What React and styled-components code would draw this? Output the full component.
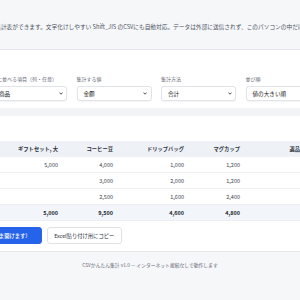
import React from "react";
import styled, { createGlobalStyle } from "styled-components";

const GlobalStyle = createGlobalStyle`
	html, body {
		margin: 0;
		padding: 0;
		background: #f6f7f9;
		font-family: "Noto Sans CJK JP", "Noto Sans", sans-serif;
	}
	body {
		width: 300px;
		height: 300px;
		overflow: hidden;
	}
`;

const Page = styled.div`
	width: 300px;
	height: 300px;
	overflow: hidden;
	display: flex;
	flex-direction: column;
`;

const Intro = styled.header`
	box-sizing: border-box;
	height: 50px;
	padding-top: 22px;
	border-bottom: 1px solid #e6e8ec;
	background: #f6f7f9;
	white-space: nowrap;
`;

const IntroText = styled.p`
	margin: 0 0 0 -4.8px;
	font-size: 5.7px;
	line-height: 10px;
	color: #4b5260;
`;

const Main = styled.main`
	background: #fff;
	padding: 25px 0 7px;
`;

const Controls = styled.div`
	display: grid;
	grid-template-columns: repeat(4, 75px);
	column-gap: 9.5px;
	margin-left: -8px;
`;

const Field = styled.label`
	display: flex;
	flex-direction: column;
	gap: 3px;
`;

const Label = styled.span`
	font-size: 5px;
	line-height: 8px;
	color: #5f6673;
	white-space: nowrap;
`;

const SelectBox = styled.div`
	box-sizing: border-box;
	height: 15px;
	display: flex;
	align-items: center;
	justify-content: space-between;
	padding: 0 3.5px 0 6px;
	border: 1px solid #e0e3e8;
	border-radius: 3px;
	background: #fff;
	box-shadow: 0 0.5px 1px rgba(0, 0, 0, 0.04);
	font-size: 5.6px;
	color: #222;
	white-space: nowrap;
`;

const Strip = styled.div`
	height: 8px;
	margin-top: 7px;
	background: #f1f3f6;
`;

const TableWrap = styled.div`
	margin: 25px 0 0 -40px;
`;

const Table = styled.table`
	border-collapse: collapse;
	table-layout: fixed;
	width: 348px;
	font-size: 5.5px;
	color: #3a3f48;
`;

const Th = styled.th`
	height: 16px;
	padding: 0 8px;
	background: #eef2f7;
	font-weight: 700;
	font-size: 5.3px;
	color: #2b3038;
	text-align: right;
	white-space: nowrap;
	vertical-align: middle;
`;

const Td = styled.td`
	height: 15px;
	padding: 0 8px;
	text-align: right;
	vertical-align: middle;
	border-bottom: 1px solid #eceff3;
	font-weight: ${(p) => (p.$total ? 700 : 400)};
	background: ${(p) => (p.$total ? "#f2f5fa" : "#fff")};
	color: ${(p) => (p.$total ? "#23272e" : "#3a3f48")};
`;

const ButtonRow = styled.div`
	display: flex;
	gap: 5px;
	margin: 6px 0 0 -77px;
`;

const Button = styled.button`
	box-sizing: border-box;
	height: 17px;
	padding: 0 ${(p) => (p.$primary ? "10px" : "6.5px")};
	border-radius: 3px;
	border: 1px solid ${(p) => (p.$primary ? "#2563eb" : "#dfe3e8")};
	background: ${(p) => (p.$primary ? "#2563eb" : "#fff")};
	color: ${(p) => (p.$primary ? "#fff" : "#2b3038")};
	font-family: inherit;
	font-size: 5.3px;
	font-weight: ${(p) => (p.$primary ? 500 : 400)};
	white-space: nowrap;
`;

const Footer = styled.footer`
	flex: 1;
	border-top: 1px solid #e6e8ec;
	background: #f6f7f9;
	padding-top: 9px;
	text-align: center;
	font-size: 4.8px;
	line-height: 8px;
	color: #5f6673;
`;

function Chevron() {
	return (
		<svg width="4" height="3" viewBox="0 0 4 3">
			<path d="M0.5 0.6 L2 2.2 L3.5 0.6" fill="none" stroke="#222" strokeWidth="0.8" />
		</svg>
	);
}

const fields = [
	{ label: "横に並べる項目（列・任意）", value: "商品" },
	{ label: "集計する値", value: "金額" },
	{ label: "集計方法", value: "合計" },
	{ label: "並び順", value: "値の大きい順" },
];

const columns = ["ギフトセット, 大", "コーヒー豆", "ドリップバッグ", "マグカップ", "返品"];
const widths = [40, 66, 55, 71, 56, 60];

const rows = [
	{ name: "東京店", values: ["5,000", "4,000", "1,000", "1,200", ""] },
	{ name: "大阪店", values: ["", "3,000", "2,000", "1,200", ""] },
	{ name: "名古屋店", values: ["", "2,500", "1,600", "2,400", ""] },
];

const totals = ["5,000", "9,500", "4,600", "4,800", ""];

export default function App() {
	return (
		<Page>
			<GlobalStyle />
			<Intro>
				<IntroText>
					集計表ができます。文字化けしやすい Shift_JIS のCSVにも自動対応。データは外部に送信されず、このパソコンの中だけで処理されます。
				</IntroText>
			</Intro>
			<Main>
				<Controls>
					{fields.map((f) => (
						<Field key={f.label}>
							<Label>{f.label}</Label>
							<SelectBox>
								<span>{f.value}</span>
								<Chevron />
							</SelectBox>
						</Field>
					))}
				</Controls>
				<Strip />
				<TableWrap>
					<Table>
						<colgroup>
							{widths.map((w, i) => (
								<col key={i} style={{ width: w }} />
							))}
						</colgroup>
						<thead>
							<tr>
								<Th>店舗</Th>
								{columns.map((c) => (
									<Th key={c}>{c}</Th>
								))}
							</tr>
						</thead>
						<tbody>
							{rows.map((r) => (
								<tr key={r.name}>
									<Td>{r.name}</Td>
									{r.values.map((v, i) => (
										<Td key={i}>{v}</Td>
									))}
								</tr>
							))}
							<tr>
								<Td $total>合計</Td>
								{totals.map((v, i) => (
									<Td $total key={i}>{v}</Td>
								))}
							</tr>
						</tbody>
					</Table>
				</TableWrap>
				<ButtonRow>
					<Button $primary>CSVで保存（Excelでそのまま開けます）</Button>
					<Button>Excel貼り付け用にコピー</Button>
				</ButtonRow>
			</Main>
			<Footer>CSVかんたん集計 v1.0 — インターネット接続なしで動作します</Footer>
		</Page>
	);
}
